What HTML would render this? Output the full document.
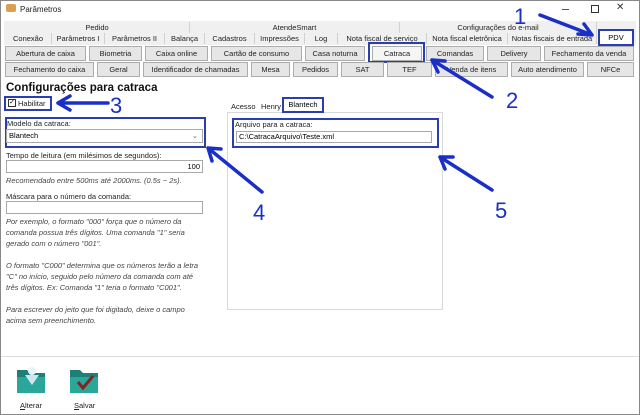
<!DOCTYPE html>
<html><head><meta charset="utf-8"><style>
*{margin:0;padding:0;box-sizing:border-box}
body{width:640px;height:415px;background:#fff;font-family:"Liberation Sans",sans-serif;font-size:8px;color:#000;position:relative;overflow:hidden}
.a{position:absolute}
.tab{position:absolute;height:11px;border-right:1px solid #d0d0d0;background:#f0f0f0;text-align:center;line-height:11px;font-size:7.5px;color:#222}
.btn{position:absolute;height:15px;border:1px solid #adadad;background:#e6e6e6;text-align:center;line-height:13px;font-size:7.5px;color:#222}
.inp{position:absolute;border:1px solid #a9a9a9;background:#fff;font-size:7.5px;padding-left:2px}
.it{font-style:italic;color:#444;font-size:7.5px;line-height:11px;white-space:nowrap}
.lab{font-size:7.5px;color:#222}
</style></head><body>
<div class="a" style="left:0;top:0;width:640px;height:415px;border:1px solid #888"></div>
<div class="a" style="left:6px;top:4px;width:10px;height:8px;background:#d8a050;border-radius:2px"></div>
<div class="a lab" style="left:20px;top:5px;font-size:8px">Parâmetros</div>
<div class="a" style="left:562px;top:9px;width:7px;height:1px;background:#555"></div>
<div class="a" style="left:591px;top:5px;width:8px;height:8px;border:1px solid #333"></div>
<div class="a" style="left:616px;top:2px;font-size:10px;color:#333">✕</div>

<div class="a" style="left:4px;top:21px;width:632px;height:24px;background:#f0f0f0"></div>
<div class="tab" style="left:5px;top:22px;width:185px">Pedido</div>
<div class="tab" style="left:190px;top:22px;width:210px">AtendeSmart</div>
<div class="tab" style="left:400px;top:22px;width:197px">Configurações do e-mail</div>
<div class="tab" style="left:5px;top:33px;width:47px">Conexão</div>
<div class="tab" style="left:52px;top:33px;width:53px">Parâmetros I</div>
<div class="tab" style="left:105px;top:33px;width:60px">Parâmetros II</div>
<div class="tab" style="left:165px;top:33px;width:40px">Balança</div>
<div class="tab" style="left:205px;top:33px;width:50px">Cadastros</div>
<div class="tab" style="left:255px;top:33px;width:50px">Impressões</div>
<div class="tab" style="left:305px;top:33px;width:33px">Log</div>
<div class="tab" style="left:338px;top:33px;width:89px">Nota fiscal de serviço</div>
<div class="tab" style="left:427px;top:33px;width:81px">Nota fiscal eletrônica</div>
<div class="tab" style="left:508px;top:33px;width:89px">Notas fiscais de entrada</div>
<div class="a" style="left:598px;top:29px;width:36px;height:17px;background:#fff;border:2px solid #2a3fae;text-align:center;line-height:13px;font-size:7.5px">PDV</div>

<div class="btn" style="left:5px;top:46px;width:81px">Abertura de caixa</div>
<div class="btn" style="left:89px;top:46px;width:53px">Biometria</div>
<div class="btn" style="left:145px;top:46px;width:63px">Caixa online</div>
<div class="btn" style="left:211px;top:46px;width:91px">Cartão de consumo</div>
<div class="btn" style="left:305px;top:46px;width:60px">Casa noturna</div>
<div class="btn" style="left:372px;top:46px;width:50px;background:#f5f5f5">Catraca</div>
<div class="a" style="left:368px;top:42px;width:57px;height:21px;border:2px solid #2a3fae"></div>
<div class="btn" style="left:426px;top:46px;width:58px">Comandas</div>
<div class="btn" style="left:487px;top:46px;width:54px">Delivery</div>
<div class="btn" style="left:544px;top:46px;width:90px">Fechamento da venda</div>
<div class="btn" style="left:5px;top:62px;width:89px">Fechamento do caixa</div>
<div class="btn" style="left:97px;top:62px;width:43px">Geral</div>
<div class="btn" style="left:143px;top:62px;width:105px">Identificador de chamadas</div>
<div class="btn" style="left:251px;top:62px;width:39px">Mesa</div>
<div class="btn" style="left:293px;top:62px;width:45px">Pedidos</div>
<div class="btn" style="left:341px;top:62px;width:43px">SAT</div>
<div class="btn" style="left:387px;top:62px;width:45px">TEF</div>
<div class="btn" style="left:435px;top:62px;width:73px">Venda de itens</div>
<div class="btn" style="left:511px;top:62px;width:73px">Auto atendimento</div>
<div class="btn" style="left:587px;top:62px;width:47px">NFCe</div>

<div class="a" style="left:6px;top:82px;font-size:11.5px;font-weight:bold;color:#111">Configurações para catraca</div>
<div class="a" style="left:4px;top:96px;width:48px;height:15px;border:2px solid #2a3fae"></div>
<div class="a" style="left:8px;top:99px;width:8px;height:8px;border:1px solid #333;font-size:7px;line-height:6px;text-align:center">✓</div>
<div class="a lab" style="left:18px;top:99px">Habilitar</div>
<div class="a" style="left:5px;top:117px;width:201px;height:31px;border:2px solid #2a3fae"></div>
<div class="a lab" style="left:7px;top:119px">Modelo da catraca:</div>
<div class="inp" style="left:6px;top:129px;width:197px;height:14px;line-height:12px">Blantech<span style="position:absolute;right:4px;color:#666">⌄</span></div>
<div class="a lab" style="left:6px;top:151px">Tempo de leitura (em milésimos de segundos):</div>
<div class="inp" style="left:6px;top:160px;width:197px;height:13px;line-height:11px;text-align:right;padding-right:2px">100</div>
<div class="a it" style="left:6px;top:175px">Recomendado entre 500ms até 2000ms. (0.5s ~ 2s).</div>
<div class="a lab" style="left:6px;top:192px">Máscara para o número da comanda:</div>
<div class="inp" style="left:6px;top:201px;width:197px;height:13px"></div>
<div class="a it" style="left:6px;top:216px">Por exemplo, o formato "000" força que o número da<br>comanda possua três dígitos. Uma comanda "1" seria<br>gerado com o número "001".<br><br>O formato "C000" determina que os números terão a letra<br>"C" no início, seguido pelo número da comanda com até<br>três dígitos. Ex: Comanda "1" teria o formato "C001".<br><br>Para escrever do jeito que foi digitado, deixe o campo<br>acima sem preenchimento.</div>

<div class="a" style="left:227px;top:112px;width:216px;height:198px;border:1px solid #d9d9d9"></div>
<div class="a lab" style="left:231px;top:102px">Acesso</div>
<div class="a lab" style="left:261px;top:102px">Henry</div>
<div class="a" style="left:282px;top:97px;width:42px;height:16px;border:2px solid #2a3fae;background:#fff;font-size:7.5px;text-align:center;line-height:12px">Blantech</div>
<div class="a" style="left:232px;top:118px;width:207px;height:30px;border:2px solid #2a3fae"></div>
<div class="a lab" style="left:235px;top:120px">Arquivo para a catraca:</div>
<div class="inp" style="left:236px;top:131px;width:196px;height:12px;line-height:10px">C:\CatracaArquivo\Teste.xml</div>

<div class="a" style="left:1px;top:356px;width:638px;height:1px;background:#ddd"></div>
<svg class="a" style="left:16px;top:365px" width="32" height="30"><path d="M1 5h10l3 3h15v20H1z" fill="#1d7f78"/><path d="M1 12h28v16H1z" fill="#2aa69a"/><path d="M9 10l7 10 7-10z" fill="#cfe6ee"/><circle cx="16" cy="6" r="4" fill="#eaf2f8"/></svg>
<svg class="a" style="left:69px;top:365px" width="32" height="30"><path d="M1 5h10l3 3h15v20H1z" fill="#1d7f78"/><path d="M1 12h28v16H1z" fill="#2aa69a"/><path d="M9 17l5 6 10-12" stroke="#8b2020" stroke-width="3" fill="none"/></svg>
<div class="a lab" style="left:20px;top:401px"><u>A</u>lterar</div>
<div class="a lab" style="left:74px;top:401px"><u>S</u>alvar</div>

<svg class="a" style="left:0;top:0" width="640" height="415">
<g stroke="#1a2fc8" stroke-width="3.5" fill="none" stroke-linecap="round">
<path d="M540 15L592 35M592 35l-14-1M592 35l-8-11"/>
<path d="M492 97L432 60M432 60l6 12M432 60l13 1"/>
<path d="M108 103H58M58 103l12-7M58 103l12 7"/>
<path d="M262 192L208 148M208 148l4 13M208 148l13 1"/>
<path d="M492 190L440 157M440 157l5 12M440 157l13 0"/>
</g>
<g fill="#1a2fc8" font-family="Liberation Sans" font-size="22">
<text x="514" y="24">1</text><text x="506" y="108">2</text><text x="110" y="113">3</text><text x="253" y="220">4</text><text x="495" y="218">5</text>
</g></svg>
</body></html>
